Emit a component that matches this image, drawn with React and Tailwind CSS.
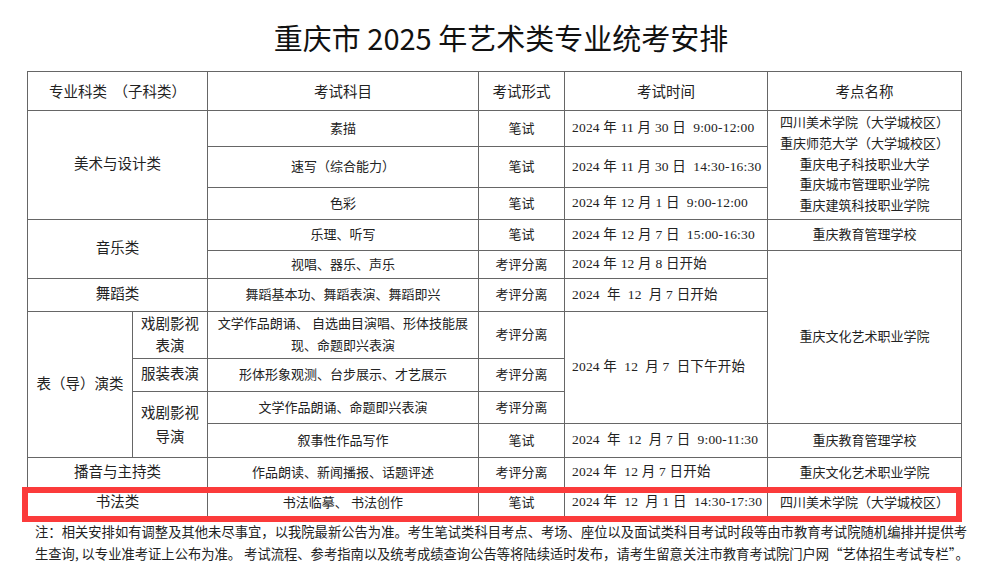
import React from "react";

const serif = "font-['Liberation_Serif','Noto_Sans_CJK_SC',serif]";
const td = "border border-[#666] p-0 text-center align-middle";
const c1 = `${td} text-[14.5px]`;
const c2 = `${td} text-[13px]`;
const c3 = `${td} text-[13px]`;
const c4 = `${td} text-[13.5px] tracking-[0.2px] text-left pl-[7px] whitespace-pre`;
const c5 = `${td} text-[13px]`;

export default function App() {
  return (
    <div className={`w-[988px] h-[579px] bg-white text-[#222] ${serif}`}>
      <div className="h-[71px] pt-[20px] pl-[14px] text-center font-['Noto_Sans_CJK_SC',sans-serif] text-[29px] leading-[34px] text-[#111]">
        重庆市 2025 年艺术类专业统考安排
      </div>
      <div className="relative ml-[27px] w-[934px]">
        <table className="w-[934px] table-fixed border-collapse">
          <colgroup>
            <col className="w-[105px]" />
            <col className="w-[75px]" />
            <col className="w-[271px]" />
            <col className="w-[86px]" />
            <col className="w-[203px]" />
            <col className="w-[194px]" />
          </colgroup>
          <tbody>
            <tr className="h-[39px] font-['Noto_Sans_CJK_SC',sans-serif] text-[14.5px]">
              <td colSpan={2} className={`${td} whitespace-pre`}>专业科类  （子科类）</td>
              <td className={td}>考试科目</td>
              <td className={td}>考试形式</td>
              <td className={td}>考试时间</td>
              <td className={td}>考点名称</td>
            </tr>
            <tr className="h-[36px]">
              <td rowSpan={3} colSpan={2} className={c1}>美术与设计类</td>
              <td className={c2}>素描</td>
              <td className={c3}>笔试</td>
              <td className={c4}>2024 年 11 月 30 日  9:00-12:00</td>
              <td rowSpan={3} className={`${c5} leading-[20.7px]`}>
                <div>四川美术学院（大学城校区）</div>
                <div>重庆师范大学（大学城校区）</div>
                <div>重庆电子科技职业大学</div>
                <div>重庆城市管理职业学院</div>
                <div>重庆建筑科技职业学院</div>
              </td>
            </tr>
            <tr className="h-[41px]">
              <td className={c2}>速写（综合能力）</td>
              <td className={c3}>笔试</td>
              <td className={c4}>2024 年 11 月 30 日  14:30-16:30</td>
            </tr>
            <tr className="h-[32px]">
              <td className={c2}>色彩</td>
              <td className={c3}>笔试</td>
              <td className={c4}>2024 年 12 月 1 日  9:00-12:00</td>
            </tr>
            <tr className="h-[31px]">
              <td rowSpan={2} colSpan={2} className={c1}>音乐类</td>
              <td className={c2}>乐理、听写</td>
              <td className={c3}>笔试</td>
              <td className={c4}>2024 年 12 月 7 日  15:00-16:30</td>
              <td className={c5}>重庆教育管理学校</td>
            </tr>
            <tr className="h-[28px]">
              <td className={c2}>视唱、器乐、声乐</td>
              <td className={c3}>考评分离</td>
              <td className={c4}>2024 年 12 月 8 日开始</td>
              <td rowSpan={5} className={c5}>重庆文化艺术职业学院</td>
            </tr>
            <tr className="h-[33px]">
              <td colSpan={2} className={c1}>舞蹈类</td>
              <td className={c2}>舞蹈基本功、舞蹈表演、舞蹈即兴</td>
              <td className={c3}>考评分离</td>
              <td className={c4}>2024  年  12  月 7 日开始</td>
            </tr>
            <tr className="h-[47px]">
              <td rowSpan={4} className={c1}>表（导）演类</td>
              <td className={`${c1} leading-[22px]`}>
                <div>戏剧影视</div>
                <div>表演</div>
              </td>
              <td className={`${c2} leading-[22px]`}>
                <div>文学作品朗诵、 自选曲目演唱、形体技能展</div>
                <div>现、命题即兴表演</div>
              </td>
              <td className={c3}>考评分离</td>
              <td rowSpan={3} className={c4}>2024 年  12  月 7  日下午开始</td>
            </tr>
            <tr className="h-[33px]">
              <td className={c1}>服装表演</td>
              <td className={c2}>形体形象观测、台步展示、才艺展示</td>
              <td className={c3}>考评分离</td>
            </tr>
            <tr className="h-[32px]">
              <td rowSpan={2} className={`${c1} leading-[24px]`}>
                <div>戏剧影视</div>
                <div>导演</div>
              </td>
              <td className={c2}>文学作品朗诵、命题即兴表演</td>
              <td className={c3}>考评分离</td>
            </tr>
            <tr className="h-[34px]">
              <td className={c2}>叙事性作品写作</td>
              <td className={c3}>笔试</td>
              <td className={c4}>2024  年  12  月 7 日  9:00-11:30</td>
              <td className={c5}>重庆教育管理学校</td>
            </tr>
            <tr className="h-[30px]">
              <td colSpan={2} className={c1}>播音与主持类</td>
              <td className={c2}>作品朗读、新闻播报、话题评述</td>
              <td className={c3}>考评分离</td>
              <td className={c4}>2024 年  12 月 7 日开始</td>
              <td className={c5}>重庆文化艺术职业学院</td>
            </tr>
            <tr className="h-[30px]">
              <td colSpan={2} className={c1}>书法类</td>
              <td className={c2}>书法临摹、 书法创作</td>
              <td className={c3}>笔试</td>
              <td className={c4}>2024 年  12  月 1 日  14:30-17:30</td>
              <td className={c5}>四川美术学院（大学城校区）</td>
            </tr>
          </tbody>
        </table>
        <div className="absolute left-[-5px] top-[416px] h-[35px] w-[940px] border-[6px] border-[#fb3b3b]"></div>
      </div>
      <div className="ml-[35px] mt-[3px] w-[932px] font-['Noto_Sans_CJK_SC',sans-serif] text-[13.3px] leading-[22px] text-[#222]">
        <div className="[text-align-last:justify] whitespace-nowrap">注：相关安排如有调整及其他未尽事宜，以我院最新公告为准。考生笔试类科目考点、考场、座位以及面试类科目考试时段等由市教育考试院随机编排并提供考</div>
        <div className="[text-align-last:justify] whitespace-nowrap">生查询, 以专业准考证上公布为准。 考试流程、参考指南以及统考成绩查询公告等将陆续适时发布，请考生留意关注市教育考试院门户网“艺体招生考试专栏”。</div>
      </div>
    </div>
  );
}
